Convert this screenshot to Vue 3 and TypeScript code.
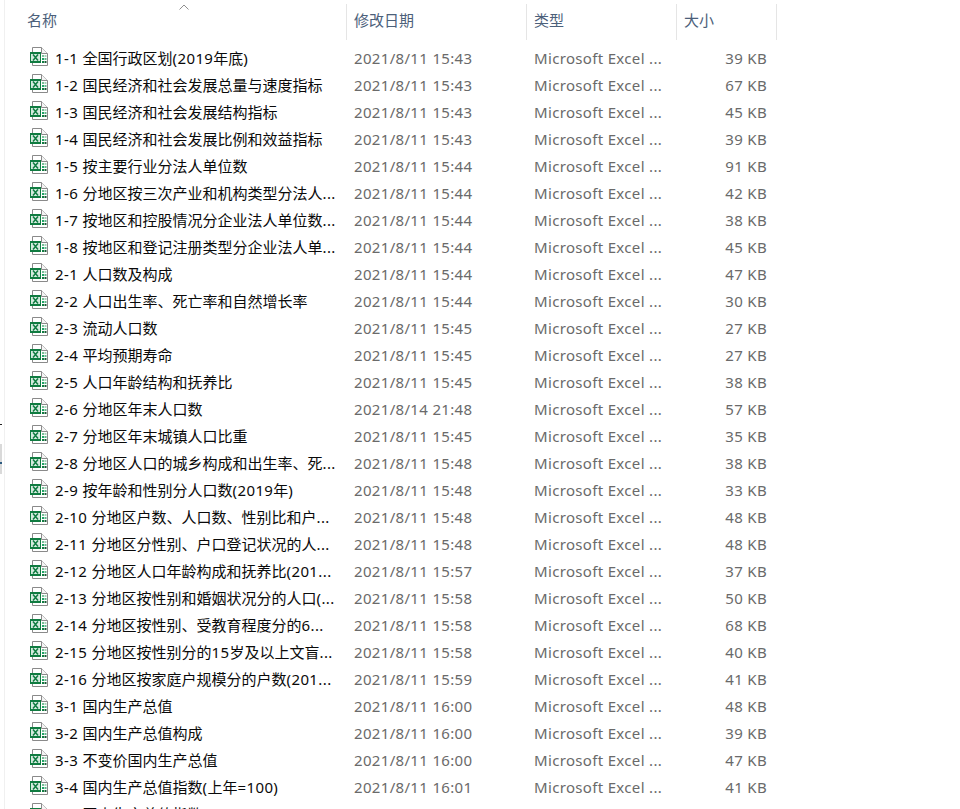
<script setup lang="ts">
interface FileRow {
  name: string
  date: string
  size: string
}

const columns = [
  { label: '名称', cls: 'col-name' },
  { label: '修改日期', cls: 'col-date' },
  { label: '类型', cls: 'col-type' },
  { label: '大小', cls: 'col-size' },
]

const files: FileRow[] = [
  { name: '1-1 全国行政区划(2019年底)', date: '2021/8/11 15:43', size: '39 KB' },
  { name: '1-2 国民经济和社会发展总量与速度指标', date: '2021/8/11 15:43', size: '67 KB' },
  { name: '1-3 国民经济和社会发展结构指标', date: '2021/8/11 15:43', size: '45 KB' },
  { name: '1-4 国民经济和社会发展比例和效益指标', date: '2021/8/11 15:43', size: '39 KB' },
  { name: '1-5 按主要行业分法人单位数', date: '2021/8/11 15:44', size: '91 KB' },
  { name: '1-6 分地区按三次产业和机构类型分法人...', date: '2021/8/11 15:44', size: '42 KB' },
  { name: '1-7 按地区和控股情况分企业法人单位数...', date: '2021/8/11 15:44', size: '38 KB' },
  { name: '1-8 按地区和登记注册类型分企业法人单...', date: '2021/8/11 15:44', size: '45 KB' },
  { name: '2-1 人口数及构成', date: '2021/8/11 15:44', size: '47 KB' },
  { name: '2-2 人口出生率、死亡率和自然增长率', date: '2021/8/11 15:44', size: '30 KB' },
  { name: '2-3 流动人口数', date: '2021/8/11 15:45', size: '27 KB' },
  { name: '2-4 平均预期寿命', date: '2021/8/11 15:45', size: '27 KB' },
  { name: '2-5 人口年龄结构和抚养比', date: '2021/8/11 15:45', size: '38 KB' },
  { name: '2-6 分地区年末人口数', date: '2021/8/14 21:48', size: '57 KB' },
  { name: '2-7 分地区年末城镇人口比重', date: '2021/8/11 15:45', size: '35 KB' },
  { name: '2-8 分地区人口的城乡构成和出生率、死...', date: '2021/8/11 15:48', size: '38 KB' },
  { name: '2-9 按年龄和性别分人口数(2019年)', date: '2021/8/11 15:48', size: '33 KB' },
  { name: '2-10 分地区户数、人口数、性别比和户...', date: '2021/8/11 15:48', size: '48 KB' },
  { name: '2-11 分地区分性别、户口登记状况的人...', date: '2021/8/11 15:48', size: '48 KB' },
  { name: '2-12 分地区人口年龄构成和抚养比(201...', date: '2021/8/11 15:57', size: '37 KB' },
  { name: '2-13 分地区按性别和婚姻状况分的人口(...', date: '2021/8/11 15:58', size: '50 KB' },
  { name: '2-14 分地区按性别、受教育程度分的6...', date: '2021/8/11 15:58', size: '68 KB' },
  { name: '2-15 分地区按性别分的15岁及以上文盲...', date: '2021/8/11 15:58', size: '40 KB' },
  { name: '2-16 分地区按家庭户规模分的户数(201...', date: '2021/8/11 15:59', size: '41 KB' },
  { name: '3-1 国内生产总值', date: '2021/8/11 16:00', size: '48 KB' },
  { name: '3-2 国内生产总值构成', date: '2021/8/11 16:00', size: '39 KB' },
  { name: '3-3 不变价国内生产总值', date: '2021/8/11 16:00', size: '47 KB' },
  { name: '3-4 国内生产总值指数(上年=100)', date: '2021/8/11 16:01', size: '41 KB' },
  { name: '3-5 国内生产总值指数(1978=100)', date: '2021/8/11 16:01', size: '41 KB' },
]

// latin runs get a little tracking, CJK stays on its 15px grid
const splitName = (name: string) => name.split(/([\x00-\x7f]+)/).filter(Boolean)
const isLatin = (part: string) => /^[\x00-\x7f]/.test(part)
</script>

<template>
  <div class="explorer">
    <i class="mark mark-top"></i>
    <div class="scroll-bit"></div>
    <i class="mark mark-mid"></i>
    <header class="head">
      <svg class="sort" width="12" height="6" viewBox="0 0 12 6">
        <path d="M1.5 5.5 6 1l4.5 4.5" fill="none" stroke="#8f8f8f" stroke-width="1" />
      </svg>
      <div v-for="col in columns" :key="col.label" class="head-cell" :class="col.cls">{{ col.label }}</div>
    </header>
    <ul class="list">
      <li v-for="file in files" :key="file.name" class="row">
        <div class="col-name name">
          <svg class="icon" width="20" height="21" viewBox="0 0 20 21">
            <path d="M3.5 1.5H12.5L18.5 7.5V19.5H3.5z" fill="#fff" stroke="#8a8a8a" />
            <path d="M12.5 1.5V7.5H18.5" fill="#f4f4f4" stroke="#8a8a8a" />
            <rect x="13" y="9" width="2" height="2" fill="#79bd98" />
            <rect x="15.5" y="9" width="2" height="2" fill="#a5d3ba" />
            <rect x="13" y="12" width="2" height="2" fill="#21a366" />
            <rect x="15.5" y="12" width="2" height="2" fill="#5fb58a" />
            <rect x="13" y="15" width="2" height="2" fill="#107c41" />
            <rect x="15.5" y="15" width="2" height="2" fill="#185c37" />
            <rect x="1" y="6" width="11" height="11" fill="#107c41" />
            <rect x="2" y="8" width="9" height="7" fill="#d5eadf" />
            <path d="m4 8.5 5 6m0-6-5 6" stroke="#107c41" stroke-width="1.5" fill="none" />
          </svg>
          <span class="label"><span
            v-for="(part, i) in splitName(file.name)"
            :key="i"
            :class="{ latin: isLatin(part) }"
          >{{ part }}</span></span>
        </div>
        <div class="col-date cell">{{ file.date }}</div>
        <div class="col-type cell">Microsoft Excel ...</div>
        <div class="col-size cell size">{{ file.size }}</div>
      </li>
    </ul>
  </div>
</template>

<style>
html,
body {
  background: #fff;
  overflow: hidden;
}
</style>

<style scoped>
.explorer {
  position: relative;
  width: 956px;
  height: 809px;
  overflow: hidden;
  margin-left: 4px;
  border-left: 1px solid #f0f0f0;
  box-sizing: border-box;
  font-family: "Noto Sans", "Noto Sans CJK SC", sans-serif;
  font-size: 15px;
  background: #fff;
}

/* scraps of the neighbouring pane */
.scroll-bit {
  position: fixed;
  left: 0;
  top: 444px;
  width: 2px;
  height: 30px;
  background: #d9d9d9;
}

.mark {
  position: fixed;
  left: 0;
  width: 2px;
  height: 1px;
  z-index: 1;
}

.mark-top {
  top: 424px;
  background: #222;
}

.mark-mid {
  top: 462px;
  height: 2px;
  background: #2c5a80;
}

.head {
  position: relative;
  display: flex;
  height: 36px;
  margin-top: 4px;
}

.sort {
  position: absolute;
  left: 173px;
  top: 0;
}

.head-cell {
  display: flex;
  align-items: center;
  padding-left: 7px;
  padding-bottom: 5px;
  box-sizing: border-box;
  color: #4c607a;
  border-right: 1px solid #e5e5e5;
}

.col-name {
  width: 342px;
  padding-left: 22px;
  flex: none;
}

.col-date {
  width: 180px;
  flex: none;
}

.col-type {
  width: 150px;
  flex: none;
}

.col-size {
  width: 100px;
  flex: none;
}

.list {
  list-style: none;
  margin: 4px 0 0;
  padding: 0;
}

.row {
  display: flex;
  align-items: center;
  height: 27px;
}

.name {
  display: flex;
  align-items: center;
  gap: 6px;
  box-sizing: border-box;
  color: #0a0a0a;
}

.icon {
  flex: none;
  margin-left: 2px;
  margin-bottom: 3px;
}

.label {
  white-space: nowrap;
}

.latin {
  letter-spacing: 0.4px;
}

.cell {
  box-sizing: border-box;
  padding-left: 7px;
  color: #6a6a6a;
  white-space: nowrap;
  letter-spacing: 0.33px;
}

.size {
  text-align: right;
  padding-right: 10px;
}
</style>
